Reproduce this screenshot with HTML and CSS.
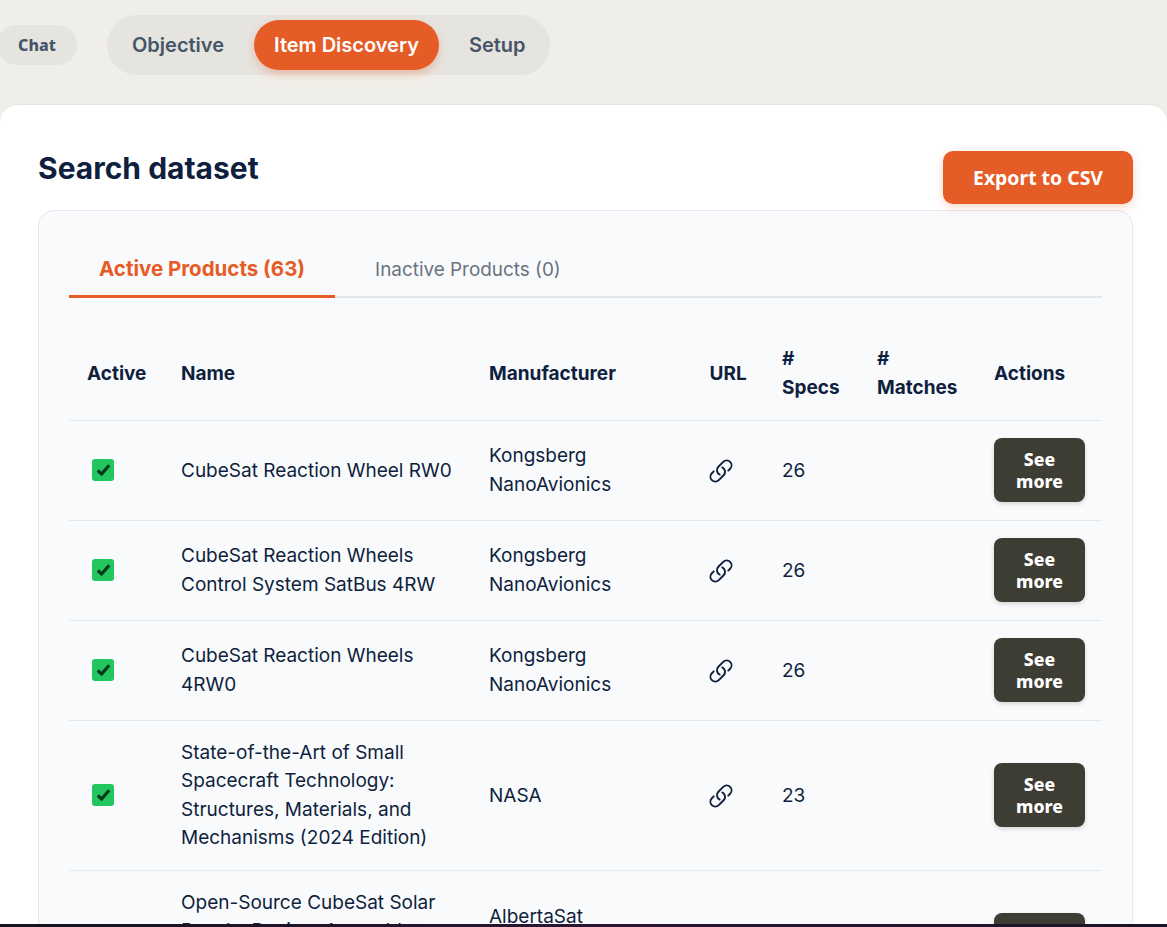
FILE: index.html
```html
<!DOCTYPE html>
<html lang="en">
<head>
<meta charset="utf-8">
<title>Search dataset</title>
<link rel="stylesheet" href="styles.css">
</head>
<body>
<svg class="defs" width="0" height="0" aria-hidden="true">
  <symbol id="link" viewBox="0 0 24 24"><path fill="none" stroke="currentColor" stroke-width="1.75" stroke-linecap="round" stroke-linejoin="round" d="M13.19 8.688a4.5 4.5 0 0 1 1.242 7.244l-4.5 4.5a4.5 4.5 0 0 1-6.364-6.364l1.757-1.757m13.35-.622 1.757-1.757a4.5 4.5 0 0 0-6.364-6.364l-4.5 4.5a4.5 4.5 0 0 0 1.242 7.244"/></symbol>
  <symbol id="check" viewBox="0 0 22 22"><rect width="22" height="22" rx="3" fill="#22c55e"/><path d="M5.8 11.5 9.6 15 17.2 6.2" fill="none" stroke="#08381a" stroke-width="3.2"/></symbol>
</svg>
<header class="topbar">
  <button class="chat">Chat</button>
  <nav class="steps">
    <a class="step">Objective</a>
    <a class="step step-active">Item Discovery</a>
    <a class="step">Setup</a>
  </nav>
</header>
<main class="sheet">
  <div class="sheet-head">
    <h1 class="title">Search dataset</h1>
    <button class="export">Export to CSV</button>
  </div>
  <section class="panel">
    <div class="tabs">
      <a class="tab tab-active">Active Products (63)</a>
      <a class="tab">Inactive Products (0)</a>
    </div>
    <table class="products">
      <colgroup>
        <col class="c1"><col class="c2"><col class="c3"><col class="c4"><col class="c5"><col class="c6"><col class="c7">
      </colgroup>
      <thead>
        <tr><th>Active</th><th>Name</th><th>Manufacturer</th><th>URL</th><th># Specs</th><th># Matches</th><th>Actions</th></tr>
      </thead>
      <tbody>
        <tr>
          <td class="cell-check"><svg class="check"><use href="#check"/></svg></td>
          <td class="cell-one">CubeSat Reaction Wheel RW0</td>
          <td>Kongsberg NanoAvionics</td>
          <td><svg class="link"><use href="#link"/></svg></td>
          <td class="cell-one">26</td><td></td>
          <td class="cell-action"><button class="more">See more</button></td>
        </tr>
        <tr>
          <td class="cell-check"><svg class="check"><use href="#check"/></svg></td>
          <td>CubeSat Reaction Wheels Control System SatBus 4RW</td>
          <td>Kongsberg NanoAvionics</td>
          <td><svg class="link"><use href="#link"/></svg></td>
          <td class="cell-one">26</td><td></td>
          <td class="cell-action"><button class="more">See more</button></td>
        </tr>
        <tr>
          <td class="cell-check"><svg class="check"><use href="#check"/></svg></td>
          <td>CubeSat Reaction Wheels 4RW0</td>
          <td>Kongsberg NanoAvionics</td>
          <td><svg class="link"><use href="#link"/></svg></td>
          <td class="cell-one">26</td><td></td>
          <td class="cell-action"><button class="more">See more</button></td>
        </tr>
        <tr>
          <td class="cell-check"><svg class="check"><use href="#check"/></svg></td>
          <td>State-of-the-Art of Small Spacecraft Technology: Structures, Materials, and Mechanisms (2024 Edition)</td>
          <td class="cell-one">NASA</td>
          <td><svg class="link"><use href="#link"/></svg></td>
          <td class="cell-one">23</td><td></td>
          <td class="cell-action"><button class="more">See more</button></td>
        </tr>
        <tr>
          <td class="cell-check"><svg class="check"><use href="#check"/></svg></td>
          <td>Open-Source CubeSat Solar Panels: Design, Assembly, and Testing Documentation Guide</td>
          <td>AlbertaSat University of Alberta Canada</td>
          <td><svg class="link"><use href="#link"/></svg></td>
          <td class="cell-one">20</td><td></td>
          <td class="cell-action"><button class="more">See more</button></td>
        </tr>
      </tbody>
    </table>
  </section>
</main>
<div class="screen-edge"></div>
</body>
</html>
```

FILE: styles.css
```css
* { box-sizing: border-box; }
html, body { height: 100%; }
body {
  margin: 0;
  height: 927px;
  overflow: hidden;
  background: #f0eee9;
  font-family: Inter, "Liberation Sans", sans-serif;
  color: #0f1f3d;
}
.defs { position: absolute; }

.topbar {
  display: flex;
  align-items: center;
  gap: 30px;
  height: 104px;
  padding-bottom: 14px;
  margin-left: -3px;
}
.chat {
  width: 80px;
  height: 40px;
  padding: 0;
  border: 0;
  border-radius: 20px;
  background: #e6e4df;
  color: #475569;
  font: 800 16px "Noto Sans", sans-serif;
}
.steps {
  display: flex;
  align-items: center;
  height: 60px;
  padding: 0 5px;
  border-radius: 30px;
  background: #e6e4df;
}
.step {
  display: flex;
  align-items: center;
  height: 50px;
  padding: 0 20px;
  border-radius: 25px;
  color: #475569;
  font-size: 20px;
  font-weight: 600;
  white-space: nowrap;
}
.step:last-child { padding-right: 19.5px; }
.step-active {
  margin: 0 10px;
  background: #e65c27;
  color: #fff;
  box-shadow: 0 4px 8px rgba(230, 92, 39, .3);
}

.sheet {
  height: 823px;
  padding: 0 34px 0 38px;
  background: #fff;
  border-top: 1px solid #e6e4df;
  border-radius: 18px 18px 0 0;
}
.sheet-head {
  display: flex;
  justify-content: space-between;
  height: 105px;
}
.title {
  margin: 45px 0 0;
  font-size: 30px;
  line-height: 36px;
  font-weight: 700;
  color: #0f1f3d;
}
.export {
  width: 190px;
  height: 53px;
  margin-top: 46px;
  border: 0;
  border-radius: 10px;
  background: #e65c27;
  color: #fff;
  font: 700 19.4px "Noto Sans", sans-serif;
  box-shadow: 0 3px 8px rgba(230, 92, 39, .25);
}

.panel {
  padding: 29px 30px 0 30px;
  background: #f9fafc;
  border: 1px solid #e5e8ee;
  border-radius: 16px;
  height: 740px;
}
.tabs {
  display: flex;
  height: 58px;
  border-bottom: 2px solid #e2e5ea;
}
.tab {
  display: flex;
  align-items: center;
  height: 58px;
  padding: 0 30px;
  margin-right: 10px;
  color: #6b7280;
  font-size: 18.9px;
  font-weight: 400;
}
.tab-active {
  color: #e65c27;
  font-size: 20.5px;
  font-weight: 700;
  padding-top: 2px;
  border-bottom: 3px solid #e65c27;
}

.products {
  width: 1033px;
  table-layout: fixed;
  border-collapse: collapse;
  font-size: 19px;
  line-height: 28.5px;
}
.c1 { width: 94px; }
.c2 { width: 308px; }
.c3 { width: 220.5px; }
.c4 { width: 72.5px; }
.c5 { width: 95px; }
.c6 { width: 117px; }
.c7 { width: 126px; }

.products th {
  height: 122px;
  padding: 30px 18px 0;
  text-align: left;
  font-weight: 700;
  vertical-align: middle;
}
.products td {
  padding: 18px 18px 17px;
  vertical-align: middle;
  border-top: 1px solid #e5e8ee;
}
.products td.cell-one { padding-top: 19px; padding-bottom: 16px; }
.products td.cell-check { padding: 17.5px 18px 17.5px 23px; }
.products td.cell-action { padding: 17.5px 18px; }
.check { display: block; width: 22px; height: 22px; }
.link { display: block; width: 26px; height: 26px; margin: 1px 0 0 -2px; color: #0f1f3d; }
.more {
  display: block;
  width: 91px;
  height: 64px;
  padding: 0 20px;
  border: 0;
  border-radius: 8px;
  background: #3d3d33;
  color: #fff;
  font: 800 17.6px/22px "Noto Sans", sans-serif;
  box-shadow: 0 2px 4px rgba(0, 0, 0, .15);
}

.screen-edge {
  position: fixed;
  left: 0;
  right: 0;
  bottom: 0;
  height: 3px;
  background: linear-gradient(90deg, #14141e, #2a1533 50%, #1a1426);
}
```
